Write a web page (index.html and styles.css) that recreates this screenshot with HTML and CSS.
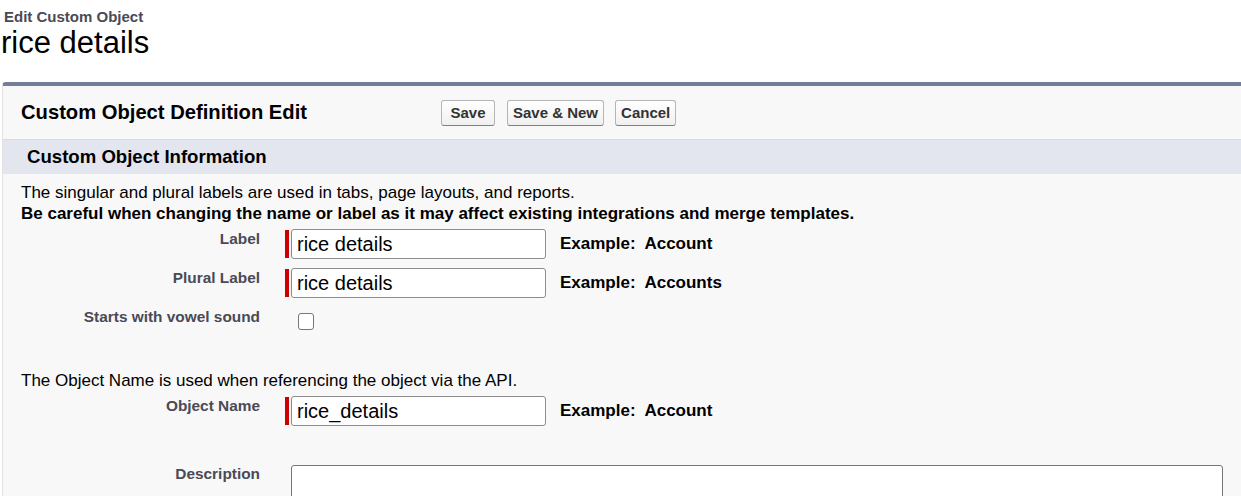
FILE: index.html
```html
<!DOCTYPE html>
<html>
<head>
<meta charset="utf-8">
<link rel="stylesheet" href="styles.css">
</head>
<body>
<div class="page-head">
  <div class="page-type">Edit Custom Object</div>
  <h1 class="page-title">rice details</h1>
</div>
<div class="panel">
  <div class="panel-header">
    <div class="panel-title">Custom Object Definition Edit</div>
    <div class="buttons">
      <button class="btn btn-save">Save</button>
      <button class="btn">Save &amp; New</button>
      <button class="btn">Cancel</button>
    </div>
  </div>
  <div class="section-band">Custom Object Information</div>
  <div class="section-body">
    <p class="info">The singular and plural labels are used in tabs, page layouts, and reports.<br><b>Be careful when changing the name or label as it may affect existing integrations and merge templates.</b></p>
    <div class="row row-first">
      <div class="label">Label</div>
      <div class="data"><span class="req"></span><input class="field" type="text" value="rice details"><span class="example">Example:&nbsp; Account</span></div>
    </div>
    <div class="row">
      <div class="label">Plural Label</div>
      <div class="data"><span class="req"></span><input class="field" type="text" value="rice details"><span class="example">Example:&nbsp; Accounts</span></div>
    </div>
    <div class="row row-check">
      <div class="label">Starts with vowel sound</div>
      <div class="data data-check"><span class="checkbox"></span></div>
    </div>
    <p class="info info-api">The Object Name is used when referencing the object via the API.</p>
    <div class="row row-first">
      <div class="label">Object Name</div>
      <div class="data"><span class="req"></span><input class="field" type="text" value="rice_details"><span class="example">Example:&nbsp; Account</span></div>
    </div>
    <div class="row row-desc">
      <div class="label">Description</div>
      <div class="data data-desc"><textarea class="textarea"></textarea></div>
    </div>
  </div>
</div>
</body>
</html>
```

FILE: styles.css
```css
html, body {
  margin: 0;
  padding: 0;
  background: #ffffff;
  overflow: hidden;
  font-family: "Liberation Sans", Arial, sans-serif;
  color: #000;
}

.page-head {
  padding-left: 3px;
  padding-top: 9px;
}

.page-type {
  font-size: 15px;
  line-height: 16px;
  font-weight: bold;
  color: #4a4a56;
  padding-left: 1px;
}

.page-title {
  margin: 1px 0 0 -2px;
  font-size: 31px;
  line-height: 34px;
  font-weight: normal;
  color: #000;
}

.panel {
  margin: 22px -12px 0 2px;
  background: #f8f8f8;
  border-top: 4px solid #747e96;
  border-left: 1px solid #e2e2e2;
  border-top-left-radius: 4px;
  height: 500px;
}

.panel-header {
  display: flex;
  align-items: center;
  height: 53px;
  border-bottom: 1px solid #dbdbdb;
}

.panel-title {
  width: 438px;
  box-sizing: border-box;
  padding-left: 18px;
  font-size: 20.2px;
  font-weight: bold;
  color: #000;
}

.buttons {
  display: flex;
  gap: 11px;
}

.btn {
  height: 26px;
  padding: 0 5px;
  font-family: "Liberation Sans", Arial, sans-serif;
  font-size: 15px;
  font-weight: bold;
  color: #333;
  background: linear-gradient(#ffffff, #f0f0f0);
  border: 1px solid #b5b5b5;
  border-bottom-color: #7f7f7f;
  border-radius: 3px;
}

.btn-save {
  width: 54px;
  margin-right: 1px;
}

.section-band {
  height: 34px;
  line-height: 34px;
  background: #e3e6ef;
  padding-left: 24px;
  font-size: 18.6px;
  font-weight: bold;
  color: #000;
}

.section-body {
  padding-top: 8px;
}

.info {
  margin: 0;
  padding-left: 18px;
  font-size: 17px;
  line-height: 21px;
  color: #000;
}

.info b {
  font-weight: bold;
}

.info-api {
  margin-top: 39px;
}

.row {
  display: grid;
  grid-template-columns: 257px 1fr;
  column-gap: 25px;
  margin-top: 9px;
}

.row-first {
  margin-top: 5px;
}

.label {
  padding-top: 1px;
  text-align: right;
  font-size: 15.4px;
  line-height: 18px;
  font-weight: bold;
  color: #4a4a56;
}

.data {
  display: flex;
  align-items: center;
}

.req {
  width: 4px;
  height: 28px;
  background: #c00;
  margin-right: 2px;
}

.field {
  box-sizing: border-box;
  width: 255px;
  height: 30px;
  padding: 0 5px;
  font-family: "Liberation Sans", Arial, sans-serif;
  font-size: 20px;
  color: #000;
  background: #fff;
  border: 1px solid #8c8c8c;
  border-radius: 3px;
  outline: none;
}

.example {
  margin-left: 14px;
  font-size: 17px;
  font-weight: bold;
  color: #000;
}

.row-check {
  height: 24px;
}

.data-check {
  align-items: flex-start;
  padding-top: 6px;
  padding-left: 13px;
}

.checkbox {
  display: block;
  box-sizing: border-box;
  width: 16px;
  height: 17px;
  background: #fff;
  border: 1px solid #767676;
  border-radius: 3px;
}

.row-desc {
  margin-top: 38px;
}

.data-desc {
  padding-left: 6px;
  align-items: flex-start;
}

.textarea {
  box-sizing: border-box;
  width: 932px;
  height: 80px;
  margin-top: 1px;
  background: #fff;
  border: 1px solid #767676;
  border-radius: 3px;
  resize: none;
  outline: none;
}
```
